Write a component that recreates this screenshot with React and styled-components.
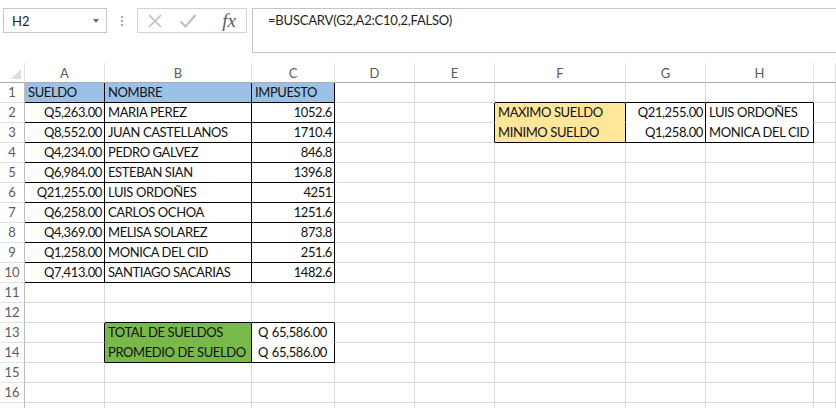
import React from "react";
import styled, { createGlobalStyle } from "styled-components";

const GlobalStyle = createGlobalStyle`
  body {
    margin: 0;
    background: #fff;
    font-family: Lato, "Liberation Sans", sans-serif;
  }
`;

const Page = styled.div`
  width: 836px;
  height: 408px;
  overflow: hidden;
  background: #fff;
`;

// formula bar
const FormulaBar = styled.div`
  display: flex;
  align-items: flex-start;
  height: 63px;
  padding-top: 8px;
  box-sizing: border-box;
`;

const NameBox = styled.div`
  margin-left: 3px;
  width: 104px;
  height: 25px;
  box-sizing: border-box;
  border: 1px solid #c6c6c6;
  display: flex;
  align-items: center;
  justify-content: space-between;
  padding: 0 7px 0 8px;
  font-size: 13px;
  color: #262626;
`;

const Arrow = styled.span`
  width: 0;
  height: 0;
  border-left: 3px solid transparent;
  border-right: 3px solid transparent;
  border-top: 4px solid #6d6d6d;
`;

const Dots = styled.div`
  width: 30px;
  display: flex;
  flex-direction: column;
  align-items: center;
  gap: 2px;
  padding-top: 8px;
  span {
    width: 2px;
    height: 2px;
    background: #a6a6a6;
  }
`;

const FnGroup = styled.div`
  width: 110px;
  height: 25px;
  box-sizing: border-box;
  border: 1px solid #d2d2d2;
  display: flex;
  align-items: center;
  padding: 0 10px 0 9px;
  gap: 16px;
  margin-right: 5px;
`;

const Fx = styled.span`
  margin-left: auto;
  font-family: "Liberation Serif", serif;
  font-style: italic;
  font-size: 19px;
  color: #5a5a5a;
  line-height: 1;
`;

const FormulaInput = styled.div`
  flex: 1;
  height: 45px;
  box-sizing: border-box;
  border: 1px solid #c6c6c6;
  border-right: none;
  padding: 3px 15px;
  font-size: 13px;
  letter-spacing: -0.2px;
  color: #1e1e1e;
`;

// sheet
const Grid = styled.div`
  display: grid;
  grid-template-columns: 25px 80px 147px 83px 80px 80px 131px 80px 108px 22px;
  grid-auto-rows: 20px;
`;

const ColHead = styled.div`
  box-sizing: border-box;
  border-right: 1px solid #e2e2e2;
  border-bottom: 1px solid #ababab;
  display: flex;
  align-items: center;
  justify-content: center;
  font-size: 13px;
  color: #5b5b5b;
  position: relative;
`;

const Corner = styled.span`
  position: absolute;
  right: 3px;
  bottom: 3px;
  width: 0;
  height: 0;
  border-left: 10px solid transparent;
  border-bottom: 10px solid #dcdcdc;
`;

const RowHead = styled.div`
  box-sizing: border-box;
  border-right: 1px solid #bcbcbc;
  border-bottom: 1px solid #e2e2e2;
  display: flex;
  align-items: flex-end;
  justify-content: center;
  padding-bottom: 2px;
  font-size: 13px;
  color: #5b5b5b;
`;

const Cell = styled.div`
  box-sizing: border-box;
  background: ${(p) => p.$fill || "#fff"};
  border-right: 1px solid ${(p) => p.$br};
  border-bottom: 1px solid ${(p) => p.$bb};
  display: flex;
  align-items: flex-end;
  justify-content: ${(p) => (p.$align === "right" ? "flex-end" : p.$align === "split" ? "space-between" : "flex-start")};
  padding: ${(p) => (p.$align === "split" ? "0 7px 2px 6px" : "0 2px 2px 3px")};
  font-size: 13px;
  letter-spacing: -0.4px;
  color: #111;
  white-space: nowrap;
`;

const BLUE = "#9bc2e6";
const YELLOW = "#ffe699";
const GREEN = "#78b94a";
const GRIDLINE = "#d9d9d9";

// column I is only a sliver at the right edge, its letter is off screen
const colLetters = ["A", "B", "C", "D", "E", "F", "G", "H", ""];

// cell contents keyed "row,col" (col 1 = A)
const cells = {
  "1,1": { v: "SUELDO", fill: BLUE },
  "1,2": { v: "NOMBRE", fill: BLUE },
  "1,3": { v: "IMPUESTO", fill: BLUE },
  "2,6": { v: "MAXIMO SUELDO", fill: YELLOW },
  "2,7": { v: "Q21,255.00", align: "right" },
  "2,8": { v: "LUIS ORDOÑES" },
  "3,6": { v: "MINIMO SUELDO", fill: YELLOW },
  "3,7": { v: "Q1,258.00", align: "right" },
  "3,8": { v: "MONICA DEL CID" },
  "13,2": { v: "TOTAL DE SUELDOS", fill: GREEN },
  "13,3": { v: ["Q", "65,586.00"], align: "split" },
  "14,2": { v: "PROMEDIO DE SUELDO", fill: GREEN },
  "14,3": { v: ["Q", "65,586.00"], align: "split" },
};

const people = [
  ["Q5,263.00", "MARIA PEREZ", "1052.6"],
  ["Q8,552.00", "JUAN CASTELLANOS", "1710.4"],
  ["Q4,234.00", "PEDRO GALVEZ", "846.8"],
  ["Q6,984.00", "ESTEBAN SIAN", "1396.8"],
  ["Q21,255.00", "LUIS ORDOÑES", "4251"],
  ["Q6,258.00", "CARLOS OCHOA", "1251.6"],
  ["Q4,369.00", "MELISA SOLAREZ", "873.8"],
  ["Q1,258.00", "MONICA DEL CID", "251.6"],
  ["Q7,413.00", "SANTIAGO SACARIAS", "1482.6"],
];
people.forEach((p, i) => {
  cells[`${i + 2},1`] = { v: p[0], align: "right" };
  cells[`${i + 2},2`] = { v: p[1] };
  cells[`${i + 2},3`] = { v: p[2], align: "right" };
});

// black bordered ranges
const ranges = [
  { r1: 1, r2: 10, c1: 1, c2: 3, innerH: true },
  { r1: 2, r2: 3, c1: 6, c2: 8, innerH: false },
  { r1: 13, r2: 14, c1: 2, c2: 3, innerH: false },
];

const inRows = (g, r) => r >= g.r1 && r <= g.r2;
const inCols = (g, c) => c >= g.c1 && c <= g.c2;

function rightEdge(r, c, fill) {
  const black = ranges.some(
    (g) => inRows(g, r) && ((c >= g.c1 && c <= g.c2) || c + 1 === g.c1)
  );
  if (black) return "#000";
  return fill || GRIDLINE;
}

function bottomEdge(r, c, fill) {
  for (const g of ranges) {
    if (!inCols(g, c)) continue;
    if (r === g.r2 || r + 1 === g.r1) return "#000";
    if (r >= g.r1 && r < g.r2) return g.innerH ? "#000" : fill || "#fff";
  }
  return fill || GRIDLINE;
}

function XIcon() {
  return (
    <svg width="16" height="16" viewBox="0 0 16 16">
      <path d="M2 2 L14 14 M14 2 L2 14" stroke="#bdbdbd" strokeWidth="1.6" fill="none" />
    </svg>
  );
}

function CheckIcon() {
  return (
    <svg width="18" height="16" viewBox="0 0 18 16">
      <path d="M1.5 8.5 L6.5 13.5 L16.5 2" stroke="#bdbdbd" strokeWidth="2" fill="none" />
    </svg>
  );
}

export default function App() {
  const rows = [];
  for (let r = 1; r <= 17; r++) {
    // row 17 only peeks in at the bottom edge
    rows.push(<RowHead key={`h${r}`}>{r < 17 ? r : ""}</RowHead>);
    for (let c = 1; c <= 9; c++) {
      const d = cells[`${r},${c}`] || {};
      rows.push(
        <Cell
          key={`${r}-${c}`}
          $fill={d.fill}
          $align={d.align}
          $br={rightEdge(r, c, d.fill)}
          $bb={bottomEdge(r, c, d.fill)}
        >
          {Array.isArray(d.v) ? d.v.map((t) => <span key={t}>{t}</span>) : d.v}
        </Cell>
      );
    }
  }

  return (
    <Page>
      <GlobalStyle />
      <FormulaBar>
        <NameBox>
          H2
          <Arrow />
        </NameBox>
        <Dots>
          <span />
          <span />
          <span />
        </Dots>
        <FnGroup>
          <XIcon />
          <CheckIcon />
          <Fx>fx</Fx>
        </FnGroup>
        <FormulaInput>=BUSCARV(G2,A2:C10,2,FALSO)</FormulaInput>
      </FormulaBar>
      <Grid>
        <ColHead>
          <Corner />
        </ColHead>
        {colLetters.map((l, i) => (
          <ColHead key={i}>{l}</ColHead>
        ))}
        {rows}
      </Grid>
    </Page>
  );
}
